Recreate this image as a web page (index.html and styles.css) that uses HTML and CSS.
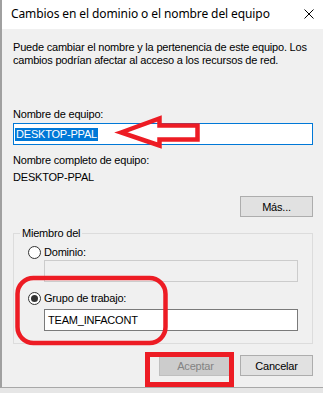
FILE: index.html
```html
<!DOCTYPE html>
<html lang="es">
<head>
    <meta charset="UTF-8">
    <meta name="viewport" content="width=device-width, initial-scale=1.0">
    <title>Cambios en el dominio o el nombre del equipo</title>
    <link rel="stylesheet" href="styles.css">
</head>
<body>
    <div class="window">
        <div class="titlebar">
            <span class="title">Cambios en el dominio o el nombre del equipo</span>
            <svg class="close" width="10" height="10" viewBox="0 0 10 10">
                <path d="M0.5 0.5 L9.5 9.5 M9.5 0.5 L0.5 9.5" stroke="#000" stroke-width="1" fill="none"/>
            </svg>
        </div>

        <div class="content">
            <p class="desc">Puede cambiar el nombre y la pertenencia de este equipo. Los<br>cambios podrían afectar al acceso a los recursos de red.</p>

            <div class="label first">Nombre de equipo:</div>
            <div class="textbox focused"><span class="selected">DESKTOP-PPAL</span></div>

            <div class="label full">Nombre completo de equipo:</div>
            <div class="value">DESKTOP-PPAL</div>

            <div class="row more-row">
                <button class="btn">Más...</button>
            </div>

            <fieldset class="group">
                <legend>Miembro del</legend>
                <div class="radio-row first-radio">
                    <span class="radio"></span>
                    <span>Dominio:</span>
                </div>
                <div class="textbox disabled indent"></div>
                <div class="radio-row second-radio">
                    <span class="radio checked"></span>
                    <span>Grupo de trabajo:</span>
                </div>
                <div class="textbox indent workgroup">TEAM_INFACONT</div>
            </fieldset>

            <div class="row buttons">
                <button class="btn off">Aceptar</button>
                <button class="btn">Cancelar</button>
            </div>
        </div>

        <!-- red marks drawn over the dialog -->
        <svg class="marks" width="323" height="393" viewBox="0 0 323 393">
            <polygon points="121,132.5 159.5,118.5 159.5,125.5 197.5,125.5 197.5,139.5 159.5,139.5 159.5,145.5" fill="none" stroke="#ed1c24" stroke-width="4.5" stroke-linejoin="miter"/>
            <rect x="17.5" y="278" width="148" height="65" rx="16" ry="16" fill="none" stroke="#ed1c24" stroke-width="4.5"/>
            <rect x="147.5" y="354.5" width="84" height="30" fill="none" stroke="#ed1c24" stroke-width="5"/>
        </svg>
    </div>
</body>
</html>
```

FILE: styles.css
```css
body {
    margin: 0;
    background-color: #e6e6e6;
    font-family: "Liberation Sans", Arial, sans-serif;
    font-size: 11px;
    line-height: 13px;
    letter-spacing: -0.2px;
    color: #000;
}
.window {
    position: relative;
    width: 321px;
    border-left: 2px solid #a0a0a0;
    border-bottom: 1px solid #a8a8a8;
    background-color: #f0f0f0;
}
.titlebar {
    height: 29px;
    background-color: #fff;
    display: flex;
    align-items: center;
    justify-content: space-between;
    padding: 0 9px 0 9px;
}
.title {
    font-family: "Noto Sans", sans-serif;
    font-size: 12px;
    line-height: 16px;
    letter-spacing: -0.1px;
    margin-top: -1px;
}
.close {
    margin-top: -1px;
}
.content {
    padding: 12px 10px 11px 11px;
}
.desc {
    margin: 0;
    white-space: nowrap;
}
.label.first {
    margin-top: 41px;
}
.label.full {
    margin-top: 9px;
}
.value {
    margin-top: 4px;
}
.textbox {
    box-sizing: border-box;
    height: 22px;
    margin-top: 2px;
    border: 1px solid #7a7a7a;
    background: #fff;
    display: flex;
    align-items: center;
    padding: 0 3px;
}
.textbox.focused {
    border-color: #0078d7;
    padding-left: 1px;
}
.selected {
    background-color: #0078d7;
    color: #fff;
    padding: 0 1px;
}
.textbox.disabled {
    background: #f0f0f0;
    border-color: #cccccc;
    margin-top: 1px;
}
.textbox.indent {
    margin-left: 16px;
}
.textbox.workgroup {
    margin-top: 4px;
}
.row {
    display: flex;
    justify-content: flex-end;
    gap: 8px;
}
.more-row {
    margin-top: 12px;
}
.btn {
    box-sizing: border-box;
    width: 73px;
    height: 21px;
    background: #e1e1e1;
    border: 1px solid #adadad;
    font-family: "Liberation Sans", Arial, sans-serif;
    font-size: 11px;
    letter-spacing: -0.2px;
    color: #000;
    padding: 0;
}
.btn.off {
    background: #cccccc;
    border-color: #bfbfbf;
    color: #838383;
}
.group {
    margin: 10px 0 0 0;
    padding: 0 14px 12px 14px;
    border: 1px solid #dcdcdc;
}
.group legend {
    padding: 0 2px;
    margin-left: -8px;
}
.radio-row {
    display: flex;
    align-items: center;
    gap: 3px;
    height: 13px;
}
.first-radio {
    margin-top: 6px;
}
.second-radio {
    margin-top: 10px;
}
.radio {
    box-sizing: border-box;
    width: 13px;
    height: 13px;
    border: 1px solid #333;
    border-radius: 50%;
    background: #fff;
    display: flex;
    align-items: center;
    justify-content: center;
}
.radio.checked::after {
    content: "";
    width: 7px;
    height: 7px;
    border-radius: 50%;
    background: #333;
}
.buttons {
    margin-top: 11px;
}
.marks {
    position: absolute;
    left: -2px;
    top: 0;
    pointer-events: none;
}
```
